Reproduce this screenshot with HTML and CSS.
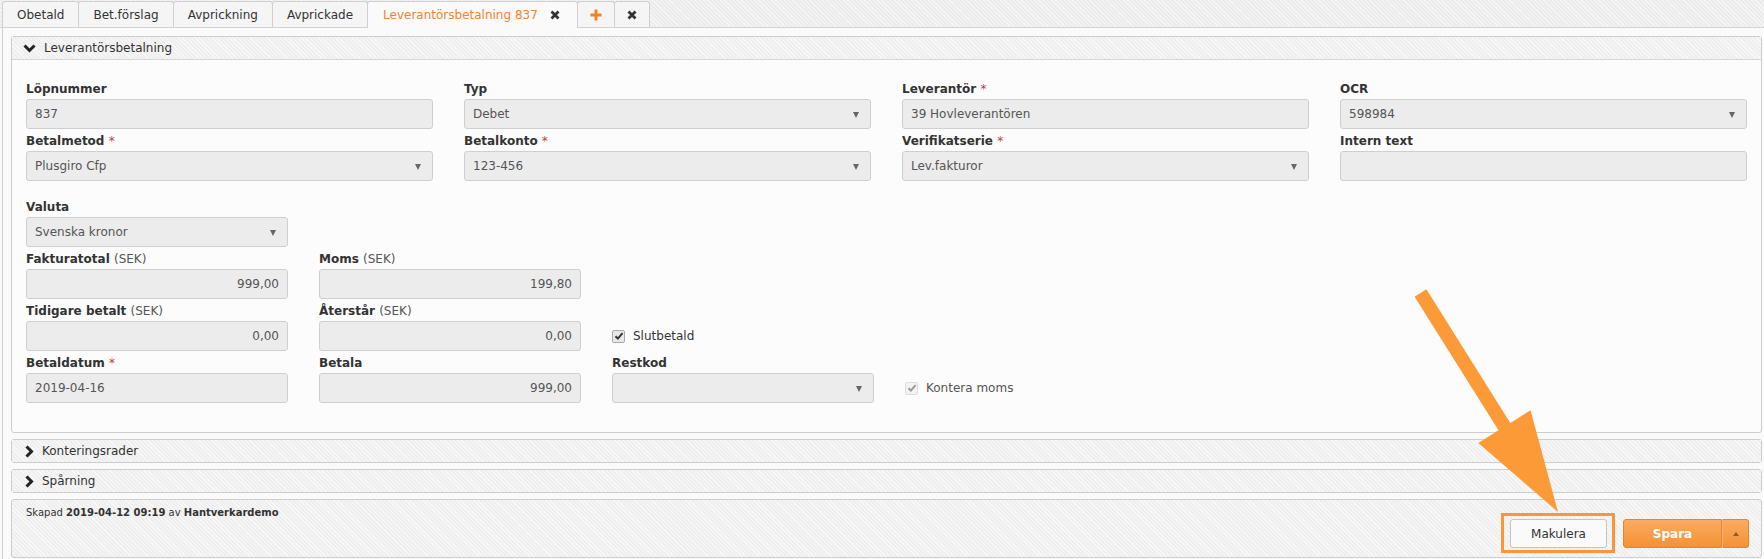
FILE: index.html
```html
<!DOCTYPE html>
<html lang="sv">
<head>
    <meta charset="UTF-8">
    <title>Leverantörsbetalning 837</title>
    <link rel="stylesheet" href="styles.css">
</head>
<body>
    <div class="tabs">
        <div class="tab">Obetald</div>
        <div class="tab">Bet.förslag</div>
        <div class="tab">Avprickning</div>
        <div class="tab">Avprickade</div>
        <div class="tab active">Leverantörsbetalning 837
            <svg class="tab-close" width="10" height="10" viewBox="0 0 10 10"><path d="M1.5 1.5l7 7M8.5 1.5l-7 7" stroke="#333" stroke-width="2.8"/></svg>
        </div>
        <div class="tab tab-icon">
            <svg width="12" height="12" viewBox="0 0 12 12"><path d="M6 0.5v11M0.5 6h11" stroke="#f5821f" stroke-width="3"/></svg>
        </div>
        <div class="tab tab-icon">
            <svg width="10" height="10" viewBox="0 0 10 10"><path d="M1.5 1.5l7 7M8.5 1.5l-7 7" stroke="#333" stroke-width="2.8"/></svg>
        </div>
    </div>

    <div class="content">
        <div class="panel">
            <div class="panel-head">
                <svg class="chev-down" width="13" height="10" viewBox="0 0 13 10"><path d="M1.5 2.5l5 5 5-5" fill="none" stroke="#222" stroke-width="3"/></svg>
                Leverantörsbetalning
            </div>
            <div class="panel-body">
                <div class="grid-main">
                    <div class="field">
                        <label>Löpnummer</label>
                        <div class="input">837</div>
                    </div>
                    <div class="field">
                        <label>Typ</label>
                        <div class="input select">Debet</div>
                    </div>
                    <div class="field">
                        <label>Leverantör <span class="req">*</span></label>
                        <div class="input">39 Hovleverantören</div>
                    </div>
                    <div class="field">
                        <label>OCR</label>
                        <div class="input select">598984</div>
                    </div>
                    <div class="field">
                        <label>Betalmetod <span class="req">*</span></label>
                        <div class="input select">Plusgiro Cfp</div>
                    </div>
                    <div class="field">
                        <label>Betalkonto <span class="req">*</span></label>
                        <div class="input select">123-456</div>
                    </div>
                    <div class="field">
                        <label>Verifikatserie <span class="req">*</span></label>
                        <div class="input select">Lev.fakturor</div>
                    </div>
                    <div class="field">
                        <label>Intern text</label>
                        <div class="input"></div>
                    </div>
                </div>

                <div class="grid-small">
                    <div class="field">
                        <label>Valuta</label>
                        <div class="input select">Svenska kronor</div>
                    </div>
                    <div></div><div></div><div></div>

                    <div class="field">
                        <label>Fakturatotal <span class="unit">(SEK)</span></label>
                        <div class="input num">999,00</div>
                    </div>
                    <div class="field">
                        <label>Moms <span class="unit">(SEK)</span></label>
                        <div class="input num">199,80</div>
                    </div>
                    <div></div><div></div>

                    <div class="field">
                        <label>Tidigare betalt <span class="unit">(SEK)</span></label>
                        <div class="input num">0,00</div>
                    </div>
                    <div class="field">
                        <label>Återstår <span class="unit">(SEK)</span></label>
                        <div class="input num">0,00</div>
                    </div>
                    <div class="check-cell">
                        <span class="check"><svg width="10" height="10" viewBox="0 0 10 10"><path d="M1.5 5.2l2.4 2.4 4.6-5.4" fill="none" stroke="#333" stroke-width="2"/></svg></span>
                        Slutbetald
                    </div>
                    <div></div>

                    <div class="field">
                        <label>Betaldatum <span class="req">*</span></label>
                        <div class="input">2019-04-16</div>
                    </div>
                    <div class="field">
                        <label>Betala</label>
                        <div class="input num">999,00</div>
                    </div>
                    <div class="field">
                        <label>Restkod</label>
                        <div class="input select"></div>
                    </div>
                    <div class="check-cell disabled">
                        <span class="check"><svg width="10" height="10" viewBox="0 0 10 10"><path d="M1.5 5.2l2.4 2.4 4.6-5.4" fill="none" stroke="#999" stroke-width="2"/></svg></span>
                        Kontera moms
                    </div>
                </div>
            </div>
        </div>

        <div class="panel">
            <div class="panel-head">
                <svg class="chev-right" width="10" height="13" viewBox="0 0 10 13"><path d="M2.5 1.5l5 5-5 5" fill="none" stroke="#222" stroke-width="3"/></svg>
                Konteringsrader
            </div>
        </div>

        <div class="panel">
            <div class="panel-head">
                <svg class="chev-right" width="10" height="13" viewBox="0 0 10 13"><path d="M2.5 1.5l5 5-5 5" fill="none" stroke="#222" stroke-width="3"/></svg>
                Spårning
            </div>
        </div>

        <div class="panel footer">
            <div class="meta">Skapad <b>2019-04-12 09:19</b> av <b>Hantverkardemo</b></div>
            <div class="actions">
                <button class="btn marked">Makulera</button>
                <div class="btn-group">
                    <button class="btn primary">Spara</button>
                    <button class="btn primary caret-btn"><span class="caret-up"></span></button>
                </div>
            </div>
        </div>
    </div>

    <!-- annotation arrow pointing at Makulera -->
    <svg class="arrow" width="1764" height="559" viewBox="0 0 1764 559">
        <polygon points="1426.4,289.3 1510.3,422.9 1530.5,410.2 1558,512 1478.3,443 1498.5,430.3 1414.6,296.7" fill="#fd9a38"/>
    </svg>
</body>
</html>
```

FILE: styles.css
```css
body {
    margin: 0;
    height: 559px;
    overflow: hidden;
    position: relative;
    font-family: "DejaVu Sans", Verdana, sans-serif;
    font-size: 12px;
    color: #333;
    background-color: #fafafa;
}

.tabs {
    display: flex;
    align-items: flex-end;
    height: 27px;
    padding-left: 2px;
    border-bottom: 1px solid #d3d3d3;
    background-color: #ececec;
    background-image: repeating-linear-gradient(45deg, rgba(255,255,255,0.55) 0 1px, transparent 1px 3px);
}

.tab {
    display: flex;
    align-items: center;
    gap: 12px;
    height: 25px;
    padding: 0 14px;
    margin-right: -1px;
    border: 1px solid #d0d0d0;
    border-bottom: none;
    border-radius: 3px 3px 0 0;
    background-color: #f5f5f5;
}

.tab:first-child {
    padding: 0 14px;
}

.tab.active {
    height: 26px;
    margin-bottom: -1px;
    padding: 0 17px 0 15px;
    background-color: #fafafa;
    color: #f5822a;
}

.tab-icon {
    padding: 0 12px;
}

.content {
    margin-left: 2px;
    border-left: 1px solid #cfcfcf;
    padding: 8px 2px 0 8px;
    height: 531px;
}

.panel {
    border: 1px solid #cdcdcd;
    border-radius: 3px;
    margin-bottom: 6px;
    background-color: #fcfcfc;
}

.panel-head {
    display: flex;
    align-items: center;
    height: 22px;
    padding-left: 11px;
    gap: 8px;
    background-color: #efefef;
    background-image: repeating-linear-gradient(45deg, rgba(255,255,255,0.6) 0 1px, transparent 1px 3px);
}

.panel-head .chev-right {
    margin-left: 1px;
}

.panel-body {
    border-top: 1px solid #d6d6d6;
    padding: 19px 14px 29px 14px;
}

.grid-main {
    display: grid;
    grid-template-columns: repeat(4, 1fr);
    column-gap: 31px;
    row-gap: 2px;
    margin-bottom: 16px;
}

.grid-small {
    display: grid;
    grid-template-columns: repeat(4, 262px);
    column-gap: 31px;
    row-gap: 2px;
}

.field label {
    display: block;
    height: 17px;
    line-height: 17px;
    padding-top: 2px;
    margin-bottom: 1px;
    font-weight: bold;
    color: #333;
}

.req {
    color: #b8433d;
    font-weight: normal;
}

.unit {
    font-weight: normal;
    color: #555;
}

.input {
    position: relative;
    height: 28px;
    line-height: 28px;
    padding: 0 8px;
    border: 1px solid #cfcfcf;
    border-radius: 3px;
    background-color: #ececec;
    color: #555;
}

.input.num {
    text-align: right;
}

.input.select::after {
    content: "";
    position: absolute;
    right: 11px;
    top: 12px;
    border-left: 3.5px solid transparent;
    border-right: 3.5px solid transparent;
    border-top: 6px solid #666;
}

.check-cell {
    display: flex;
    align-items: center;
    gap: 8px;
    padding-top: 20px;
    color: #333;
}

.check-cell.disabled {
    color: #555;
}

.check {
    display: flex;
    align-items: center;
    justify-content: center;
    width: 11px;
    height: 11px;
    border: 1px solid #aaa;
    border-radius: 2px;
    background-color: #e8e8e8;
}

.check-cell.disabled .check {
    border-color: #ddd;
    background-color: #f3f3f3;
}

.footer {
    display: flex;
    justify-content: space-between;
    align-items: flex-start;
    height: 57px;
    padding: 0 12px 0 14px;
    background-color: #efefef;
    background-image: repeating-linear-gradient(45deg, rgba(255,255,255,0.6) 0 1px, transparent 1px 3px);
}

.meta {
    padding-top: 7px;
    font-size: 10px;
    color: #333;
}

.actions {
    display: flex;
    gap: 16px;
    margin-top: 19px;
}

.btn {
    height: 29px;
    padding: 0 18px;
    border: 1px solid #c4c4c4;
    border-radius: 3px;
    background-color: #fafafa;
    font-family: inherit;
    font-size: 12px;
    color: #333;
}

.btn.marked {
    position: relative;
    width: 97px;
}

.btn.marked::after {
    content: "";
    position: absolute;
    left: -10px;
    right: -9px;
    top: -7px;
    bottom: -6px;
    border: 3px solid #f7963a;
}

.btn-group {
    display: flex;
}

.btn.primary {
    width: 99px;
    border-color: #e8852c;
    border-radius: 3px 0 0 3px;
    background-image: linear-gradient(#fbab62, #f49233);
    color: #fff;
    font-weight: bold;
}

.btn.caret-btn {
    width: 27px;
    padding: 0;
    border-left-color: #f8b074;
    border-radius: 0 3px 3px 0;
}

.caret-up {
    display: inline-block;
    border-left: 3px solid transparent;
    border-right: 3px solid transparent;
    border-bottom: 4px solid #8a5a30;
    vertical-align: middle;
}

.arrow {
    position: absolute;
    left: 0;
    top: 0;
    pointer-events: none;
}
```
